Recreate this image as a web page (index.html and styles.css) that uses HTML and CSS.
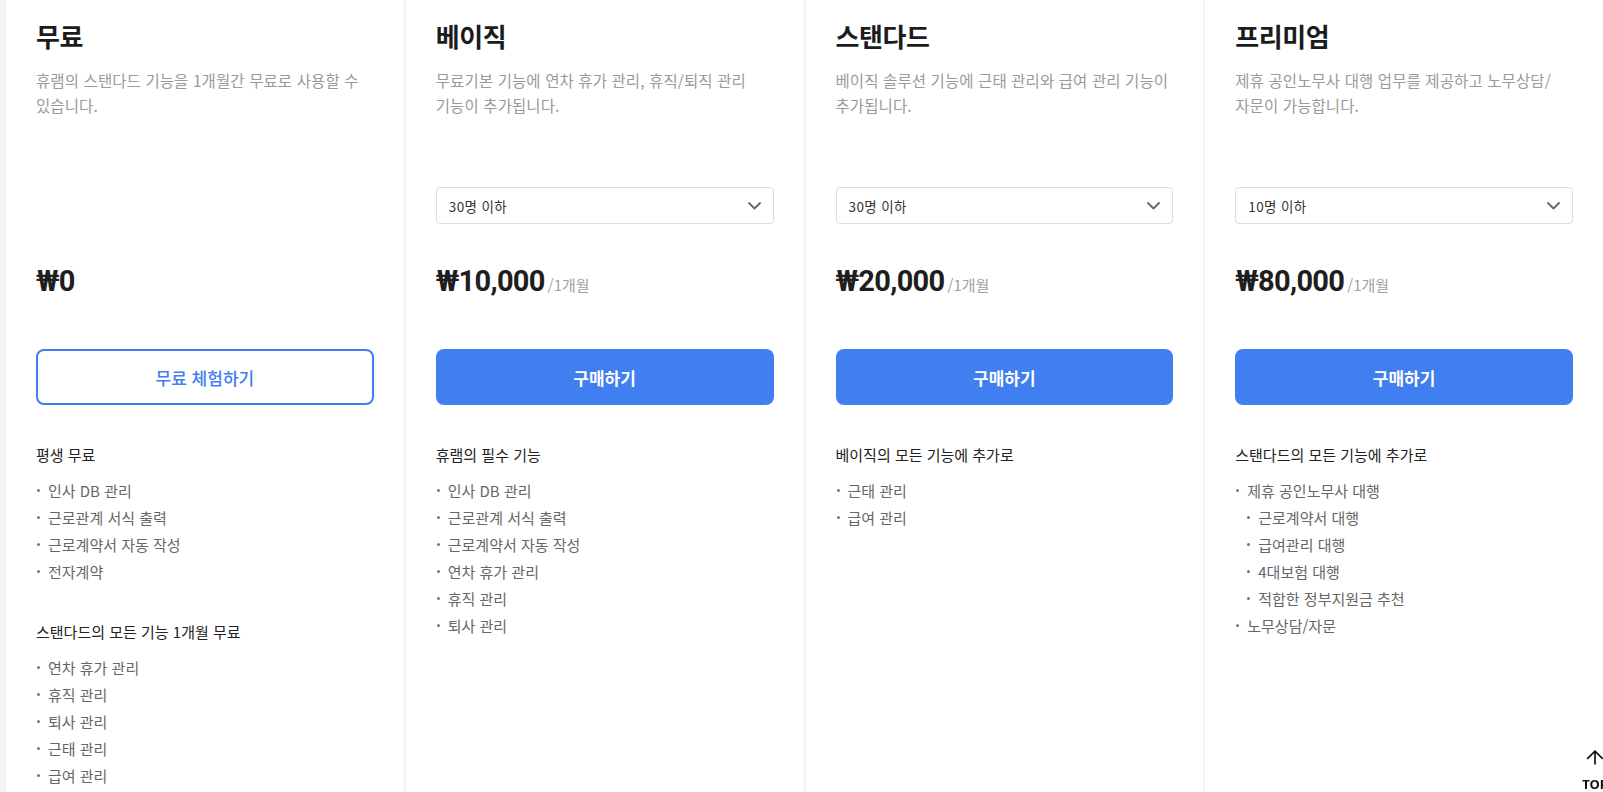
FILE: index.html
```html
<!DOCTYPE html>
<html lang="ko">
<head>
<meta charset="utf-8">
<title>요금제</title>
<link rel="stylesheet" href="styles.css">
</head>
<body>
<div class="plans">
  <section class="plan">
    <h2 class="plan-title">무료</h2>
    <p class="plan-desc">휴램의 스탠다드 기능을 1개월간 무료로 사용할 수 있습니다.</p>
    <div class="option-slot"></div>
    <div class="price"><span class="amount">₩0</span></div>
    <button class="btn btn-outline">무료 체험하기</button>
    <div class="features">
      <h3 class="feat-head">평생 무료</h3>
      <ul class="feat-list">
        <li>인사 DB 관리</li>
        <li>근로관계 서식 출력</li>
        <li>근로계약서 자동 작성</li>
        <li>전자계약</li>
      </ul>
      <h3 class="feat-head feat-head-next">스탠다드의 모든 기능 1개월 무료</h3>
      <ul class="feat-list">
        <li>연차 휴가 관리</li>
        <li>휴직 관리</li>
        <li>퇴사 관리</li>
        <li>근태 관리</li>
        <li>급여 관리</li>
      </ul>
    </div>
  </section>

  <section class="plan">
    <h2 class="plan-title">베이직</h2>
    <p class="plan-desc">무료기본 기능에 연차 휴가 관리, 휴직/퇴직 관리 기능이 추가됩니다.</p>
    <div class="option-slot">
      <div class="select"><span>30명 이하</span><svg class="chev" width="13" height="8" viewBox="0 0 13 8"><path d="M1 1l5.5 5.5L12 1" fill="none" stroke="#666" stroke-width="1.8" stroke-linecap="round" stroke-linejoin="round"/></svg></div>
    </div>
    <div class="price"><span class="amount">₩10,000</span><span class="per">/1개월</span></div>
    <button class="btn btn-solid">구매하기</button>
    <div class="features">
      <h3 class="feat-head">휴램의 필수 기능</h3>
      <ul class="feat-list">
        <li>인사 DB 관리</li>
        <li>근로관계 서식 출력</li>
        <li>근로계약서 자동 작성</li>
        <li>연차 휴가 관리</li>
        <li>휴직 관리</li>
        <li>퇴사 관리</li>
      </ul>
    </div>
  </section>

  <section class="plan">
    <h2 class="plan-title">스탠다드</h2>
    <p class="plan-desc">베이직 솔루션 기능에 근태 관리와 급여 관리 기능이 추가됩니다.</p>
    <div class="option-slot">
      <div class="select"><span>30명 이하</span><svg class="chev" width="13" height="8" viewBox="0 0 13 8"><path d="M1 1l5.5 5.5L12 1" fill="none" stroke="#666" stroke-width="1.8" stroke-linecap="round" stroke-linejoin="round"/></svg></div>
    </div>
    <div class="price"><span class="amount">₩20,000</span><span class="per">/1개월</span></div>
    <button class="btn btn-solid">구매하기</button>
    <div class="features">
      <h3 class="feat-head">베이직의 모든 기능에 추가로</h3>
      <ul class="feat-list">
        <li>근태 관리</li>
        <li>급여 관리</li>
      </ul>
    </div>
  </section>

  <section class="plan">
    <h2 class="plan-title">프리미엄</h2>
    <p class="plan-desc">제휴 공인노무사 대행 업무를 제공하고 노무상담/ 자문이 가능합니다.</p>
    <div class="option-slot">
      <div class="select"><span>10명 이하</span><svg class="chev" width="13" height="8" viewBox="0 0 13 8"><path d="M1 1l5.5 5.5L12 1" fill="none" stroke="#666" stroke-width="1.8" stroke-linecap="round" stroke-linejoin="round"/></svg></div>
    </div>
    <div class="price"><span class="amount">₩80,000</span><span class="per">/1개월</span></div>
    <button class="btn btn-solid">구매하기</button>
    <div class="features">
      <h3 class="feat-head">스탠다드의 모든 기능에 추가로</h3>
      <ul class="feat-list">
        <li>제휴 공인노무사 대행</li>
        <li class="sub">근로계약서 대행</li>
        <li class="sub">급여관리 대행</li>
        <li class="sub">4대보험 대행</li>
        <li class="sub">적합한 정부지원금 추천</li>
        <li>노무상담/자문</li>
      </ul>
    </div>
  </section>
</div>

<a class="top-btn" href="#">
  <svg width="18" height="15" viewBox="0 0 18 15"><path d="M9 14.5V1.2M1.2 8.8L9 1.2l7.8 7.6" fill="none" stroke="#111" stroke-width="1.7"/></svg>
  <span>TOP</span>
</a>
</body>
</html>
```

FILE: styles.css
```css
html, body {
  margin: 0;
  padding: 0;
  height: 100%;
  overflow: hidden;
}
body {
  font-family: "Noto Sans CJK KR", "Noto Sans", sans-serif;
  background: #f4f4f4;
  color: #222;
}
.plans {
  display: flex;
  gap: 2px;
  padding-left: 6px;
  height: 100vh;
}
.plan {
  flex: 1 1 0;
  min-width: 0;
  background: #fff;
  padding: 20px 30px 0;
  box-sizing: border-box;
  display: flex;
  flex-direction: column;
}
.plan-title {
  margin: 0;
  font-size: 26px;
  line-height: 32px;
  font-weight: 700;
  color: #1c1c1c;
  letter-spacing: -0.4px;
}
.plan-desc {
  margin: 16px 0 0;
  font-size: 15.5px;
  line-height: 25px;
  height: 50px;
  color: #9a9a9a;
  word-break: keep-all;
  letter-spacing: 0.1px;
}
.option-slot {
  margin-top: 69px;
  height: 37px;
}
.select {
  height: 37px;
  box-sizing: border-box;
  border: 1px solid #d9dde3;
  border-radius: 4px;
  display: flex;
  align-items: center;
  justify-content: space-between;
  padding: 0 12px 0 12px;
  font-size: 13.5px;
  color: #333;
  letter-spacing: 0.4px;
}
.chev { display: block; }
.price {
  margin-top: 37px;
  height: 40px;
  display: flex;
  align-items: baseline;
  line-height: 40px;
}
.amount {
  font-family: "Roboto", "Noto Sans CJK KR", sans-serif;
  font-size: 29px;
  font-weight: 700;
  color: #1e1e1e;
  letter-spacing: -0.7px;
}
.per {
  margin-left: 3px;
  font-size: 15px;
  color: #a0a0a0;
}
.btn {
  margin-top: 48px;
  height: 56px;
  width: 100%;
  border-radius: 8px;
  font-family: "Noto Sans CJK KR", sans-serif;
  font-size: 17px;
  cursor: pointer;
  box-sizing: border-box;
}
.btn-solid {
  background: #417ef0;
  border: none;
  color: #fff;
  font-weight: 700;
}
.btn-outline {
  background: #fff;
  border: 2px solid #417ef0;
  color: #417ef0;
  font-weight: 500;
}
.features {
  margin-top: 39px;
}
.feat-head {
  margin: 0;
  font-size: 15px;
  line-height: 22px;
  font-weight: 400;
  color: #222;
}
.feat-head-next {
  margin-top: 36px;
}
.feat-list {
  list-style: none;
  margin: 11px 0 0;
  padding: 0;
}
.feat-list li {
  font-size: 15px;
  line-height: 27px;
  color: #666;
  display: flex;
  align-items: center;
}
.feat-list li::before {
  content: "";
  width: 3px;
  height: 3px;
  border-radius: 50%;
  background: #777;
  margin: 0 8px 0 1px;
  flex: none;
}
.feat-list li.sub {
  padding-left: 11px;
}
.top-btn {
  position: fixed;
  right: -12px;
  bottom: 1px;
  width: 40px;
  display: flex;
  flex-direction: column;
  align-items: center;
  gap: 12px;
  text-decoration: none;
  color: #111;
  font-family: "Noto Sans", sans-serif;
  font-size: 13px;
  font-weight: 700;
  line-height: 14px;
}
.top-btn svg { display: block; }
```
